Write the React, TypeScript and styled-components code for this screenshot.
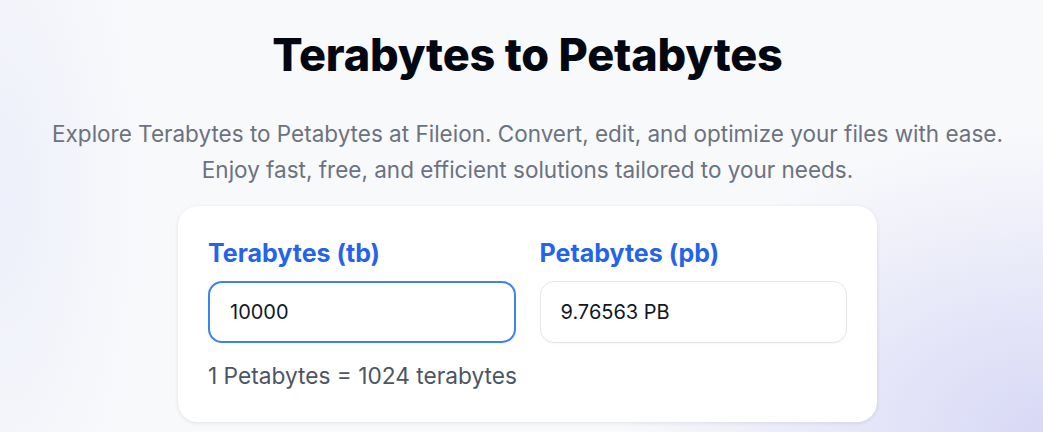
import React, { useState } from 'react';
import styled, { createGlobalStyle } from 'styled-components';

const GlobalStyle = createGlobalStyle`
  html, body {
    margin: 0;
    padding: 0;
  }
  body {
    font-family: Inter, "Noto Sans", "Liberation Sans", sans-serif;
    background: #f8f9fb;
  }
`;

const Page = styled.main`
  min-height: 432px;
  box-sizing: border-box;
  padding: 27px 0 0 12px;
  display: flex;
  flex-direction: column;
  align-items: center;
  background:
    radial-gradient(ellipse 420px 300px at 100% 100%, rgba(214, 214, 246, 0.95), rgba(214, 214, 246, 0) 100%),
    radial-gradient(ellipse 140px 380px at 0% 45%, rgba(236, 238, 250, 0.9), rgba(236, 238, 250, 0) 100%),
    #f8f9fb;
  overflow: hidden;
`;

const Title = styled.h1`
  margin: 0;
  font-size: 45px;
  line-height: 56px;
  font-weight: 800;
  letter-spacing: -0.2px;
  color: #030712;
  text-align: center;
`;

const Subtitle = styled.p`
  margin: 33px 0 0;
  font-size: 22.5px;
  line-height: 36px;
  color: #6b7280;
  text-align: center;
`;

const Card = styled.section`
  margin-top: 18px;
  width: 699px;
  box-sizing: border-box;
  padding: 31px 30px 31px;
  background: #ffffff;
  border-radius: 20px;
  box-shadow: 0 1px 4px rgba(15, 23, 42, 0.1);
`;

const Fields = styled.div`
  display: grid;
  grid-template-columns: minmax(0, 1fr) minmax(0, 1fr);
  gap: 24px;
`;

const Field = styled.div`
  display: flex;
  flex-direction: column;
  min-width: 0;
`;

const Label = styled.label`
  font-size: 25px;
  line-height: 32px;
  font-weight: 700;
  color: #2563eb;
  margin-bottom: 12px;
`;

const Input = styled.input<{ $focused?: boolean }>`
  width: 100%;
  min-width: 0;
  height: 62px;
  box-sizing: border-box;
  padding: 0 20px;
  border-radius: 14px;
  border: ${p => (p.$focused ? '2px solid #3b82f6' : '1px solid #e5e7eb')};
  font-family: inherit;
  font-size: 20px;
  color: #111827;
  caret-color: #111827;
  background: #ffffff;
  outline: none;
  box-shadow: ${p => (p.$focused ? 'none' : '0 1px 2px rgba(15, 23, 42, 0.04)')};
`;

const Note = styled.p`
  margin: 18px 0 0;
  font-size: 22.7px;
  line-height: 30px;
  color: #4b5563;
`;

export default function App() {
  const [value, setValue] = useState('10000');
  const num = parseFloat(value);
  const result = Number.isFinite(num) ? `${parseFloat((num / 1024).toPrecision(6))} PB` : '';

  return (
    <>
      <GlobalStyle />
      <Page>
        <Title>Terabytes to Petabytes</Title>
        <Subtitle>
          Explore Terabytes to Petabytes at Fileion. Convert, edit, and optimize your files with ease.
          <br />
          Enjoy fast, free, and efficient solutions tailored to your needs.
        </Subtitle>
        <Card>
          <Fields>
            <Field>
              <Label htmlFor="tb">Terabytes (tb)</Label>
              <Input id="tb" $focused autoFocus value={value} onChange={e => setValue(e.target.value)} />
            </Field>
            <Field>
              <Label htmlFor="pb">Petabytes (pb)</Label>
              <Input id="pb" readOnly value={result} />
            </Field>
          </Fields>
          <Note>1 Petabytes = 1024 terabytes</Note>
        </Card>
      </Page>
    </>
  );
}
